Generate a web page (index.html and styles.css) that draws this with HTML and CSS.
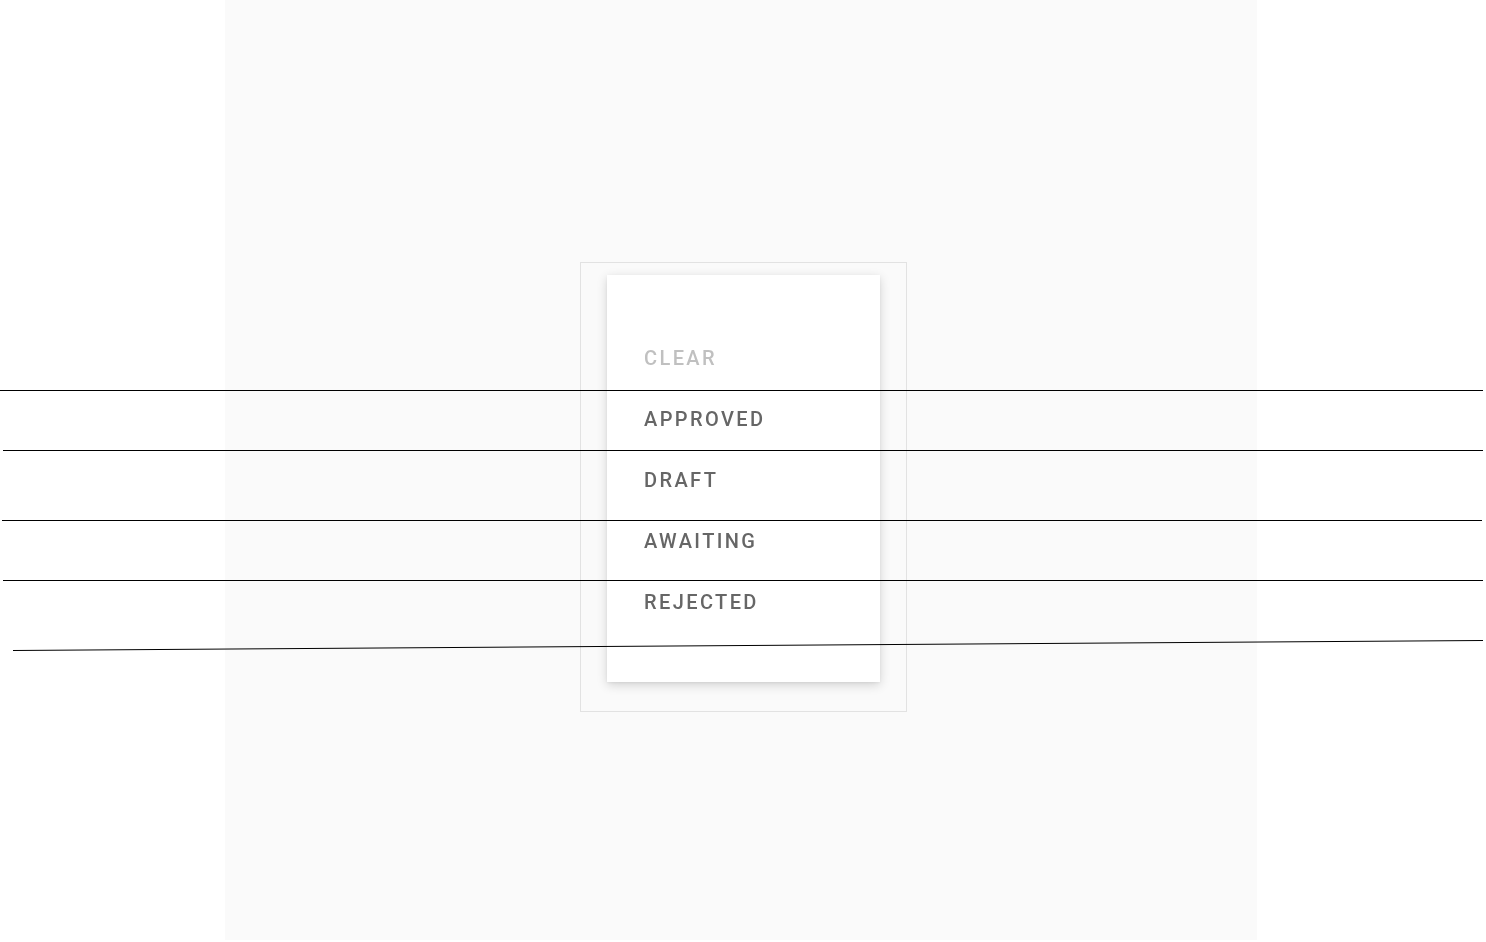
FILE: index.html
```html
<!DOCTYPE html>
<html>
<head>
<meta charset="utf-8">
<link rel="stylesheet" href="styles.css">
</head>
<body>
<div class="panel">
  <div class="frame">
    <div class="menu">
      <div class="item disabled">CLEAR</div>
      <div class="item">APPROVED</div>
      <div class="item">DRAFT</div>
      <div class="item">AWAITING</div>
      <div class="item">REJECTED</div>
    </div>
  </div>
</div>
<svg class="rules" width="1486" height="942" viewBox="0 0 1486 942">
  <line x1="0" y1="390.5" x2="1483" y2="390.5"/>
  <line x1="3" y1="450.5" x2="1483" y2="450.5"/>
  <line x1="2" y1="520.5" x2="1482" y2="520.5"/>
  <line x1="3" y1="580.5" x2="1483" y2="580.5"/>
  <line x1="13" y1="650.5" x2="1483" y2="640.5"/>
</svg>
</body>
</html>
```
FILE: styles.css
```css
html, body {
  margin: 0;
  padding: 0;
  background: #ffffff;
  width: 1486px;
  height: 942px;
  overflow: hidden;
  font-family: Roboto, "Liberation Sans", sans-serif;
}
.panel {
  margin-left: 225px;
  width: 1032px;
  height: 940px;
  background: #fafafa;
  box-sizing: border-box;
  padding-top: 262px;
  padding-left: 355px;
}
.frame {
  width: 327px;
  height: 450px;
  box-sizing: border-box;
  border: 1px solid #e2e2e2;
  padding: 12px 26px 0 26px;
  filter: blur(0.7px);
}
.menu {
  width: 273px;
  height: 407px;
  box-sizing: border-box;
  background: #ffffff;
  box-shadow: 0 3px 10px rgba(0, 0, 0, 0.16), 0 1px 3px rgba(0, 0, 0, 0.06);
  padding: 52px 0 50px 37px;
  display: flex;
  flex-direction: column;
}
.item {
  height: 61px;
  display: flex;
  align-items: center;
  font-size: 20px;
  font-weight: 500;
  letter-spacing: 2.4px;
  color: #666666;
}
.item.disabled {
  color: #c0c0c0;
}
.rules {
  position: absolute;
  left: 0;
  top: 0;
  pointer-events: none;
}
.rules line {
  stroke: #000;
  stroke-width: 1;
}
```
